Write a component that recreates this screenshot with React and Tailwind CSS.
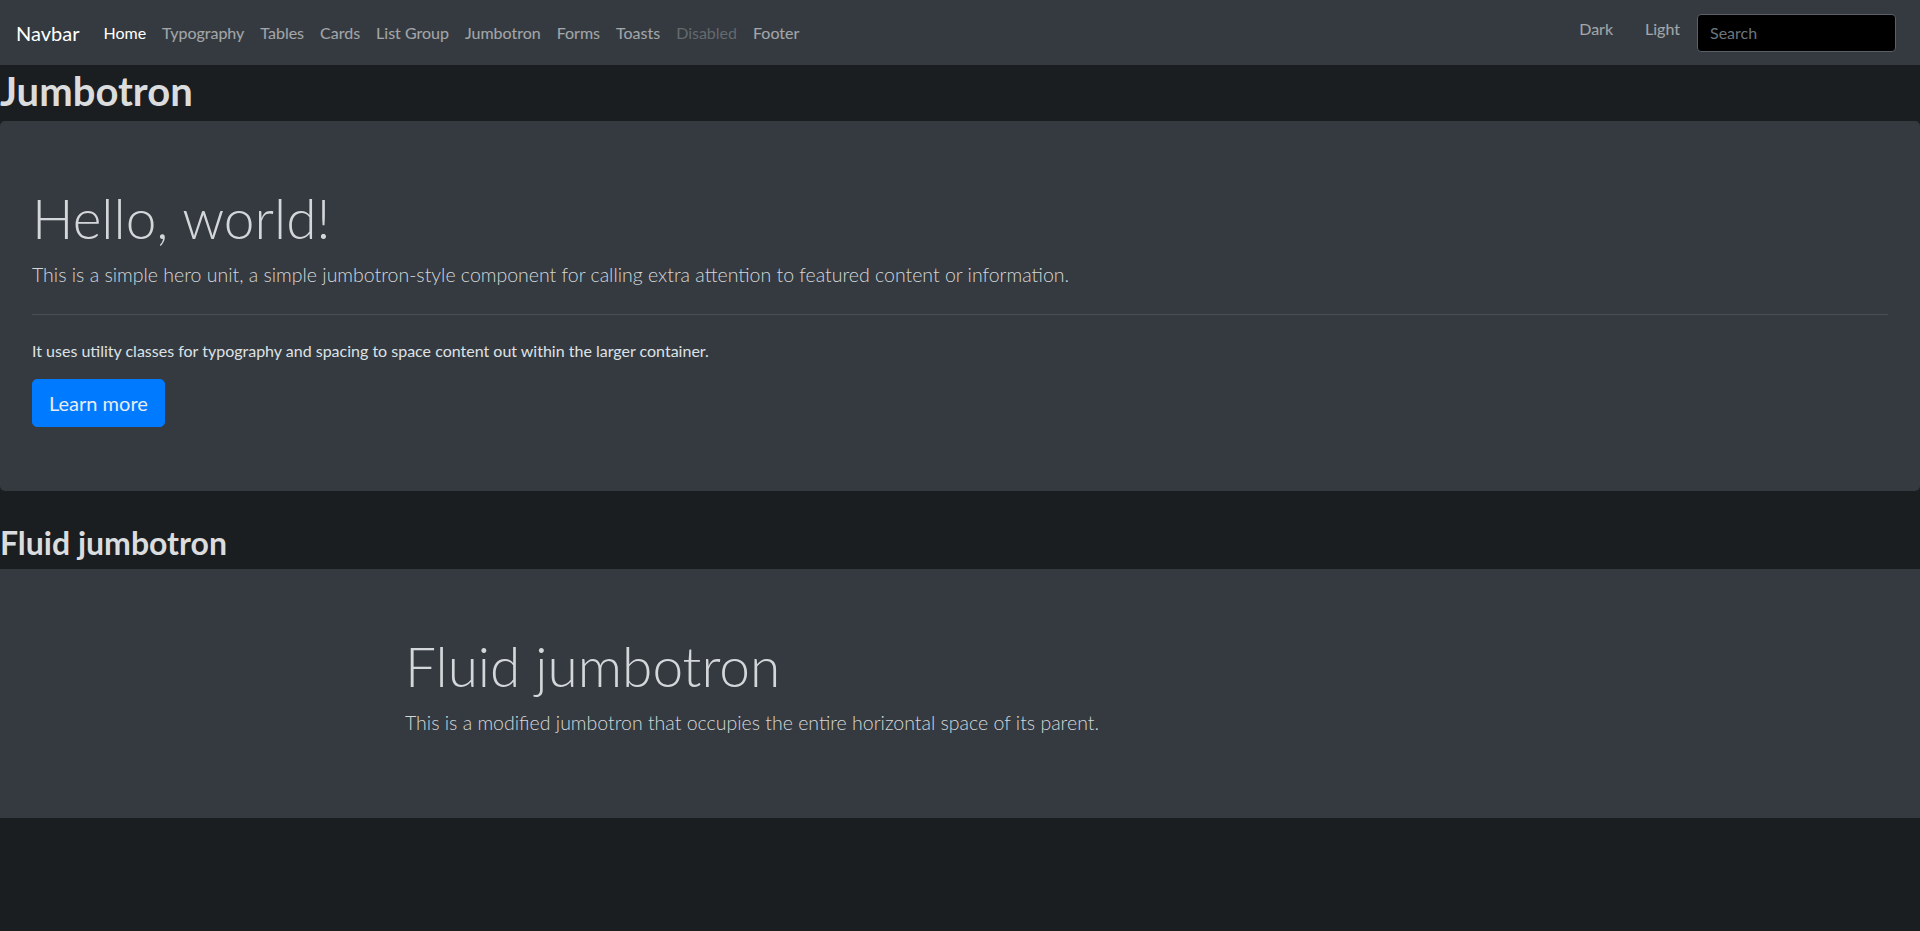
import React from 'react';

const links = [
  { label: 'Home', active: true },
  { label: 'Typography' },
  { label: 'Tables' },
  { label: 'Cards' },
  { label: 'List Group' },
  { label: 'Jumbotron' },
  { label: 'Forms' },
  { label: 'Toasts' },
  { label: 'Disabled', disabled: true },
  { label: 'Footer' },
];

const Navbar = () => (
  <nav className="h-[65px] bg-[#343a40] flex items-center pl-4 pr-6">
    <a className="text-[20px] leading-[30px] text-white mr-4">Navbar</a>
    <ul className="flex items-center">
      {links.map((l) => (
        <li key={l.label}>
          <a
            className={`block px-2 py-2 text-[16px] leading-6 ${
              l.active ? 'text-white' : l.disabled ? 'text-white/25' : 'text-white/55'
            }`}
          >
            {l.label}
          </a>
        </li>
      ))}
    </ul>
    <div className="ml-auto flex items-center">
      <span className="px-4 mb-2 text-[16px] leading-6 text-white/55">Dark</span>
      <span className="px-4 mb-2 text-[16px] leading-6 text-white/55">Light</span>
      <input
        type="text"
        placeholder="Search"
        className="ml-px w-[199px] h-[38px] bg-black border border-[#5a6066] rounded-[4px] px-3 text-[16px] text-white placeholder:text-[#6c757d] outline-none"
      />
    </div>
  </nav>
);

export default function App() {
  return (
    <div className="min-h-screen bg-[#1b1e21] text-[#dee2e6] [font-family:Lato,sans-serif]">
      <Navbar />

      <h1 className="text-[40px] leading-[52px] font-bold mb-1 text-[#dadcde]">Jumbotron</h1>
      <div className="bg-[#343a40] rounded-[5px] px-8 py-16 mb-8">
        <h1 className="text-[55px] leading-[67px] font-light mb-2 text-[#d4d7da]">Hello, world!</h1>
        <p className="text-[19.5px] leading-[30px] font-light text-[#d4d7da]">
          This is a simple hero unit, a simple jumbotron-style component for calling extra attention to featured content or information.
        </p>
        <hr className="my-6 border-t border-[#4a4f55]" />
        <p className="text-[16px] leading-6 mb-4 text-[#dee2e6]">
          It uses utility classes for typography and spacing to space content out within the larger container.
        </p>
        <a className="inline-block align-top bg-[#007bff] border border-[#007bff] text-[#e9ecef] text-[20px] leading-[30px] px-4 py-2 rounded-[5px]">
          Learn more
        </a>
      </div>

      <h2 className="text-[32px] leading-[40px] font-bold mb-[6px] text-[#dadcde]">Fluid jumbotron</h2>
      <div className="bg-[#343a40] py-16">
        <div className="w-[1140px] mx-auto px-[15px]">
          <h1 className="text-[55px] leading-[67px] font-light mb-2 text-[#d4d7da]">Fluid jumbotron</h1>
          <p className="text-[19.5px] leading-[30px] font-light mb-4 text-[#d4d7da]">
            This is a modified jumbotron that occupies the entire horizontal space of its parent.
          </p>
        </div>
      </div>
    </div>
  );
}
